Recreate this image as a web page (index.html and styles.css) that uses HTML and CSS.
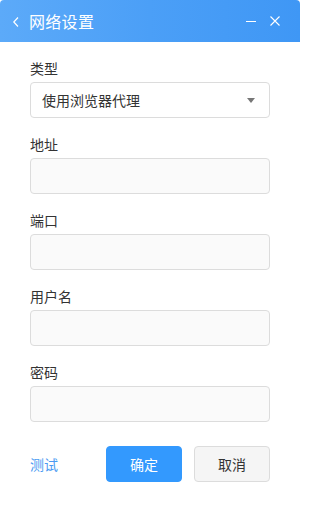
FILE: index.html
```html
<!DOCTYPE html>
<html lang="zh-CN">
<head>
<meta charset="utf-8">
<link rel="stylesheet" href="styles.css">
</head>
<body>
<div class="window">
  <div class="titlebar">
    <svg class="back" width="8" height="12" viewBox="0 0 8 12"><path d="M6 1.5 L1.8 6 L6 10.5" fill="none" stroke="#fff" stroke-width="1.2"/></svg>
    <span class="title">网络设置</span>
    <div class="controls">
      <svg class="min" width="12" height="12" viewBox="0 0 12 12"><path d="M1 6.5 H11" stroke="#fff" stroke-width="1.2"/></svg>
      <svg class="close" width="12" height="12" viewBox="0 0 12 12"><path d="M1.5 1.5 L10.5 10.5 M10.5 1.5 L1.5 10.5" stroke="#fff" stroke-width="1.1"/></svg>
    </div>
  </div>
  <div class="form">
    <div class="group">
      <div class="label">类型</div>
      <div class="select"><span>使用浏览器代理</span><span class="caret"></span></div>
    </div>
    <div class="group">
      <div class="label">地址</div>
      <div class="input"></div>
    </div>
    <div class="group">
      <div class="label">端口</div>
      <div class="input"></div>
    </div>
    <div class="group">
      <div class="label">用户名</div>
      <div class="input"></div>
    </div>
    <div class="group">
      <div class="label">密码</div>
      <div class="input"></div>
    </div>
  </div>
  <div class="footer">
    <a class="test">测试</a>
    <div class="buttons">
      <button class="btn primary">确定</button>
      <button class="btn">取消</button>
    </div>
  </div>
</div>
</body>
</html>
```
FILE: styles.css
```css
html, body {
  margin: 0;
  padding: 0;
  background: #fff;
}
body {
  font-family: "Noto Sans CJK SC", "Noto Sans", sans-serif;
  color: #333;
}
.window {
  width: 300px;
  height: 506px;
  background: #fff;
  border-radius: 4px 4px 2px 2px;
  overflow: hidden;
  box-sizing: border-box;
}
.titlebar {
  height: 42px;
  background: linear-gradient(90deg, #5caaf9 0%, #4b9ff7 50%, #3f97f5 100%);
  display: flex;
  align-items: center;
  padding: 0 19px 0 12px;
  color: #fff;
}
.back {
  margin-right: 9px;
  margin-top: 1px;
}
.title {
  font-size: 16px;
  line-height: 20px;
  flex: 1;
  letter-spacing: 0.3px;
}
.controls {
  display: flex;
  align-items: center;
  gap: 12px;
}
.form {
  padding: 16px 30px 0;
}
.group {
  margin-bottom: 16px;
}
.label {
  font-size: 14px;
  line-height: 20px;
  margin-bottom: 4px;
  color: #333;
}
.select, .input {
  height: 36px;
  box-sizing: border-box;
  border: 1px solid #dcdcdc;
  border-radius: 4px;
}
.select {
  background: #fff;
  display: flex;
  align-items: center;
  justify-content: space-between;
  padding: 0 14px 0 11px;
  font-size: 14px;
  color: #333;
}
.caret {
  width: 0;
  height: 0;
  border-left: 4px solid transparent;
  border-right: 4px solid transparent;
  border-top: 5px solid #777;
}
.input {
  background: #fafafa;
}
.footer {
  display: flex;
  align-items: center;
  justify-content: space-between;
  padding: 8px 30px 0;
}
.test {
  font-size: 14px;
  color: #4a9bf2;
}
.buttons {
  display: flex;
  gap: 12px;
}
.btn {
  width: 76px;
  height: 36px;
  box-sizing: border-box;
  border: 1px solid #dcdcdc;
  border-radius: 4px;
  background: #f5f5f5;
  font-family: "Noto Sans CJK SC", "Noto Sans", sans-serif;
  font-size: 14px;
  color: #333;
  padding: 0;
}
.btn.primary {
  background: #3399fe;
  border-color: #3399fe;
  color: #fff;
}
```
